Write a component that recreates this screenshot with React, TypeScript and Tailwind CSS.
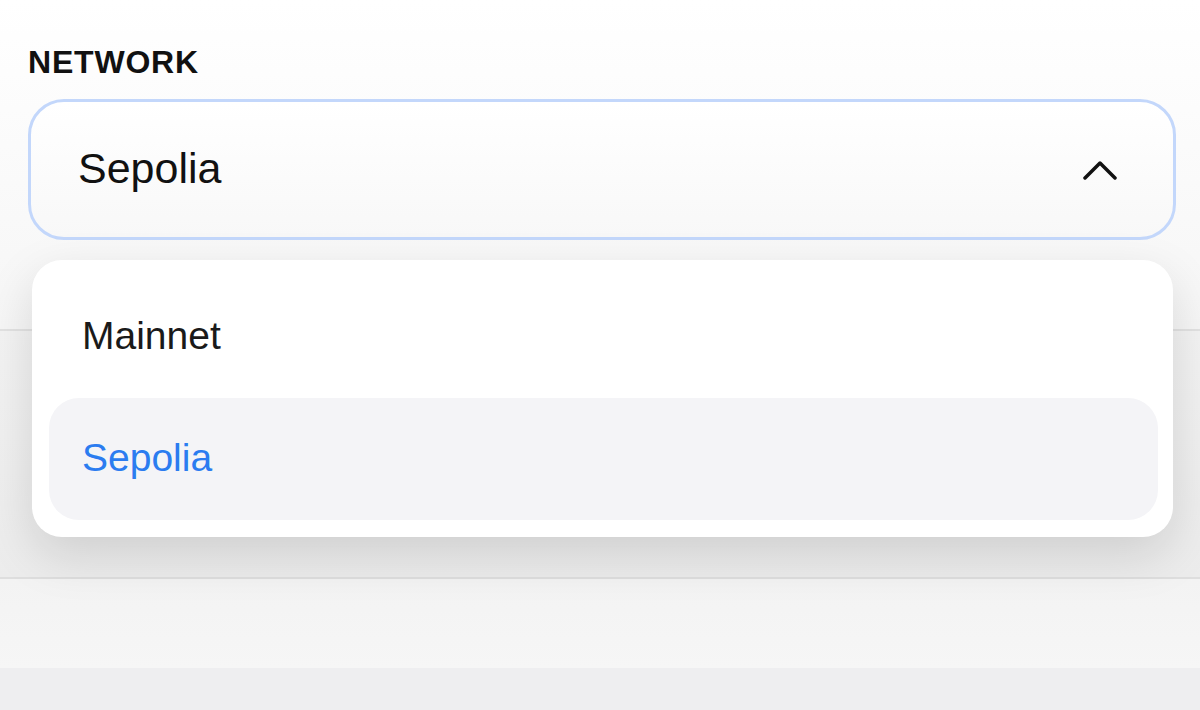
import { useState } from "react";

const networks = ["Mainnet", "Sepolia"];

function Chevron() {
  return (
    <svg width="34" height="22" viewBox="0 0 34 22" fill="none" className="shrink-0">
      <polyline points="2,19 17,4 32,19" stroke="#111" strokeWidth="3.5" strokeLinecap="round" strokeLinejoin="round" />
    </svg>
  );
}

export default function App() {
  const [selected, setSelected] = useState("Sepolia");

  return (
    <div className="relative min-h-[710px] bg-white" style={{ fontFamily: '"Liberation Sans", Arial, sans-serif' }}>
      <section className="h-[331px] border-b-2 border-[#e2e2e2] bg-gradient-to-b from-white to-[#f6f6f6] px-[28px] pt-[46px]">
        <div className="text-[32px] leading-none font-bold tracking-[0.8px] text-[#111]">NETWORK</div>
        <div className="relative mt-[21px] mr-[-4px]">
          <button className="flex h-[141px] w-full items-center justify-between rounded-[36px] border-[3px] border-[#c3d7fb] bg-gradient-to-b from-white to-[#f8f8f8] pl-[47px] pr-[56px] text-left">
            <span className="pb-[2px] text-[43px] leading-none text-[#111]">{selected}</span>
            <Chevron />
          </button>

          <div className="absolute left-[4px] right-[3px] top-[161px] z-10 rounded-[30px] bg-white p-[17px] pr-[15px] shadow-[0_18px_50px_rgba(0,0,0,0.13)]">
            {networks.map((n) => {
              const active = n === selected;
              return (
                <div
                  key={n}
                  onClick={() => setSelected(n)}
                  className={
                    active
                      ? "flex h-[122px] items-center rounded-[30px] bg-[#f4f4f7] pb-[4px] pl-[33px] text-[39px] leading-none text-[#2b7cf0]"
                      : "flex h-[121px] items-center rounded-[30px] pb-[4px] pl-[33px] text-[39px] leading-none text-[#1a1a1a]"
                  }
                >
                  {n}
                </div>
              );
            })}
          </div>
        </div>
      </section>

      <section className="h-[248px] border-b-2 border-[#dedede] bg-gradient-to-b from-[#f3f3f3] to-[#ececec]" />
      <section className="h-[89px] bg-gradient-to-b from-[#f3f3f3] to-[#f6f6f6]" />
      <section className="h-[42px] bg-[#eeeef0]" />
    </div>
  );
}
